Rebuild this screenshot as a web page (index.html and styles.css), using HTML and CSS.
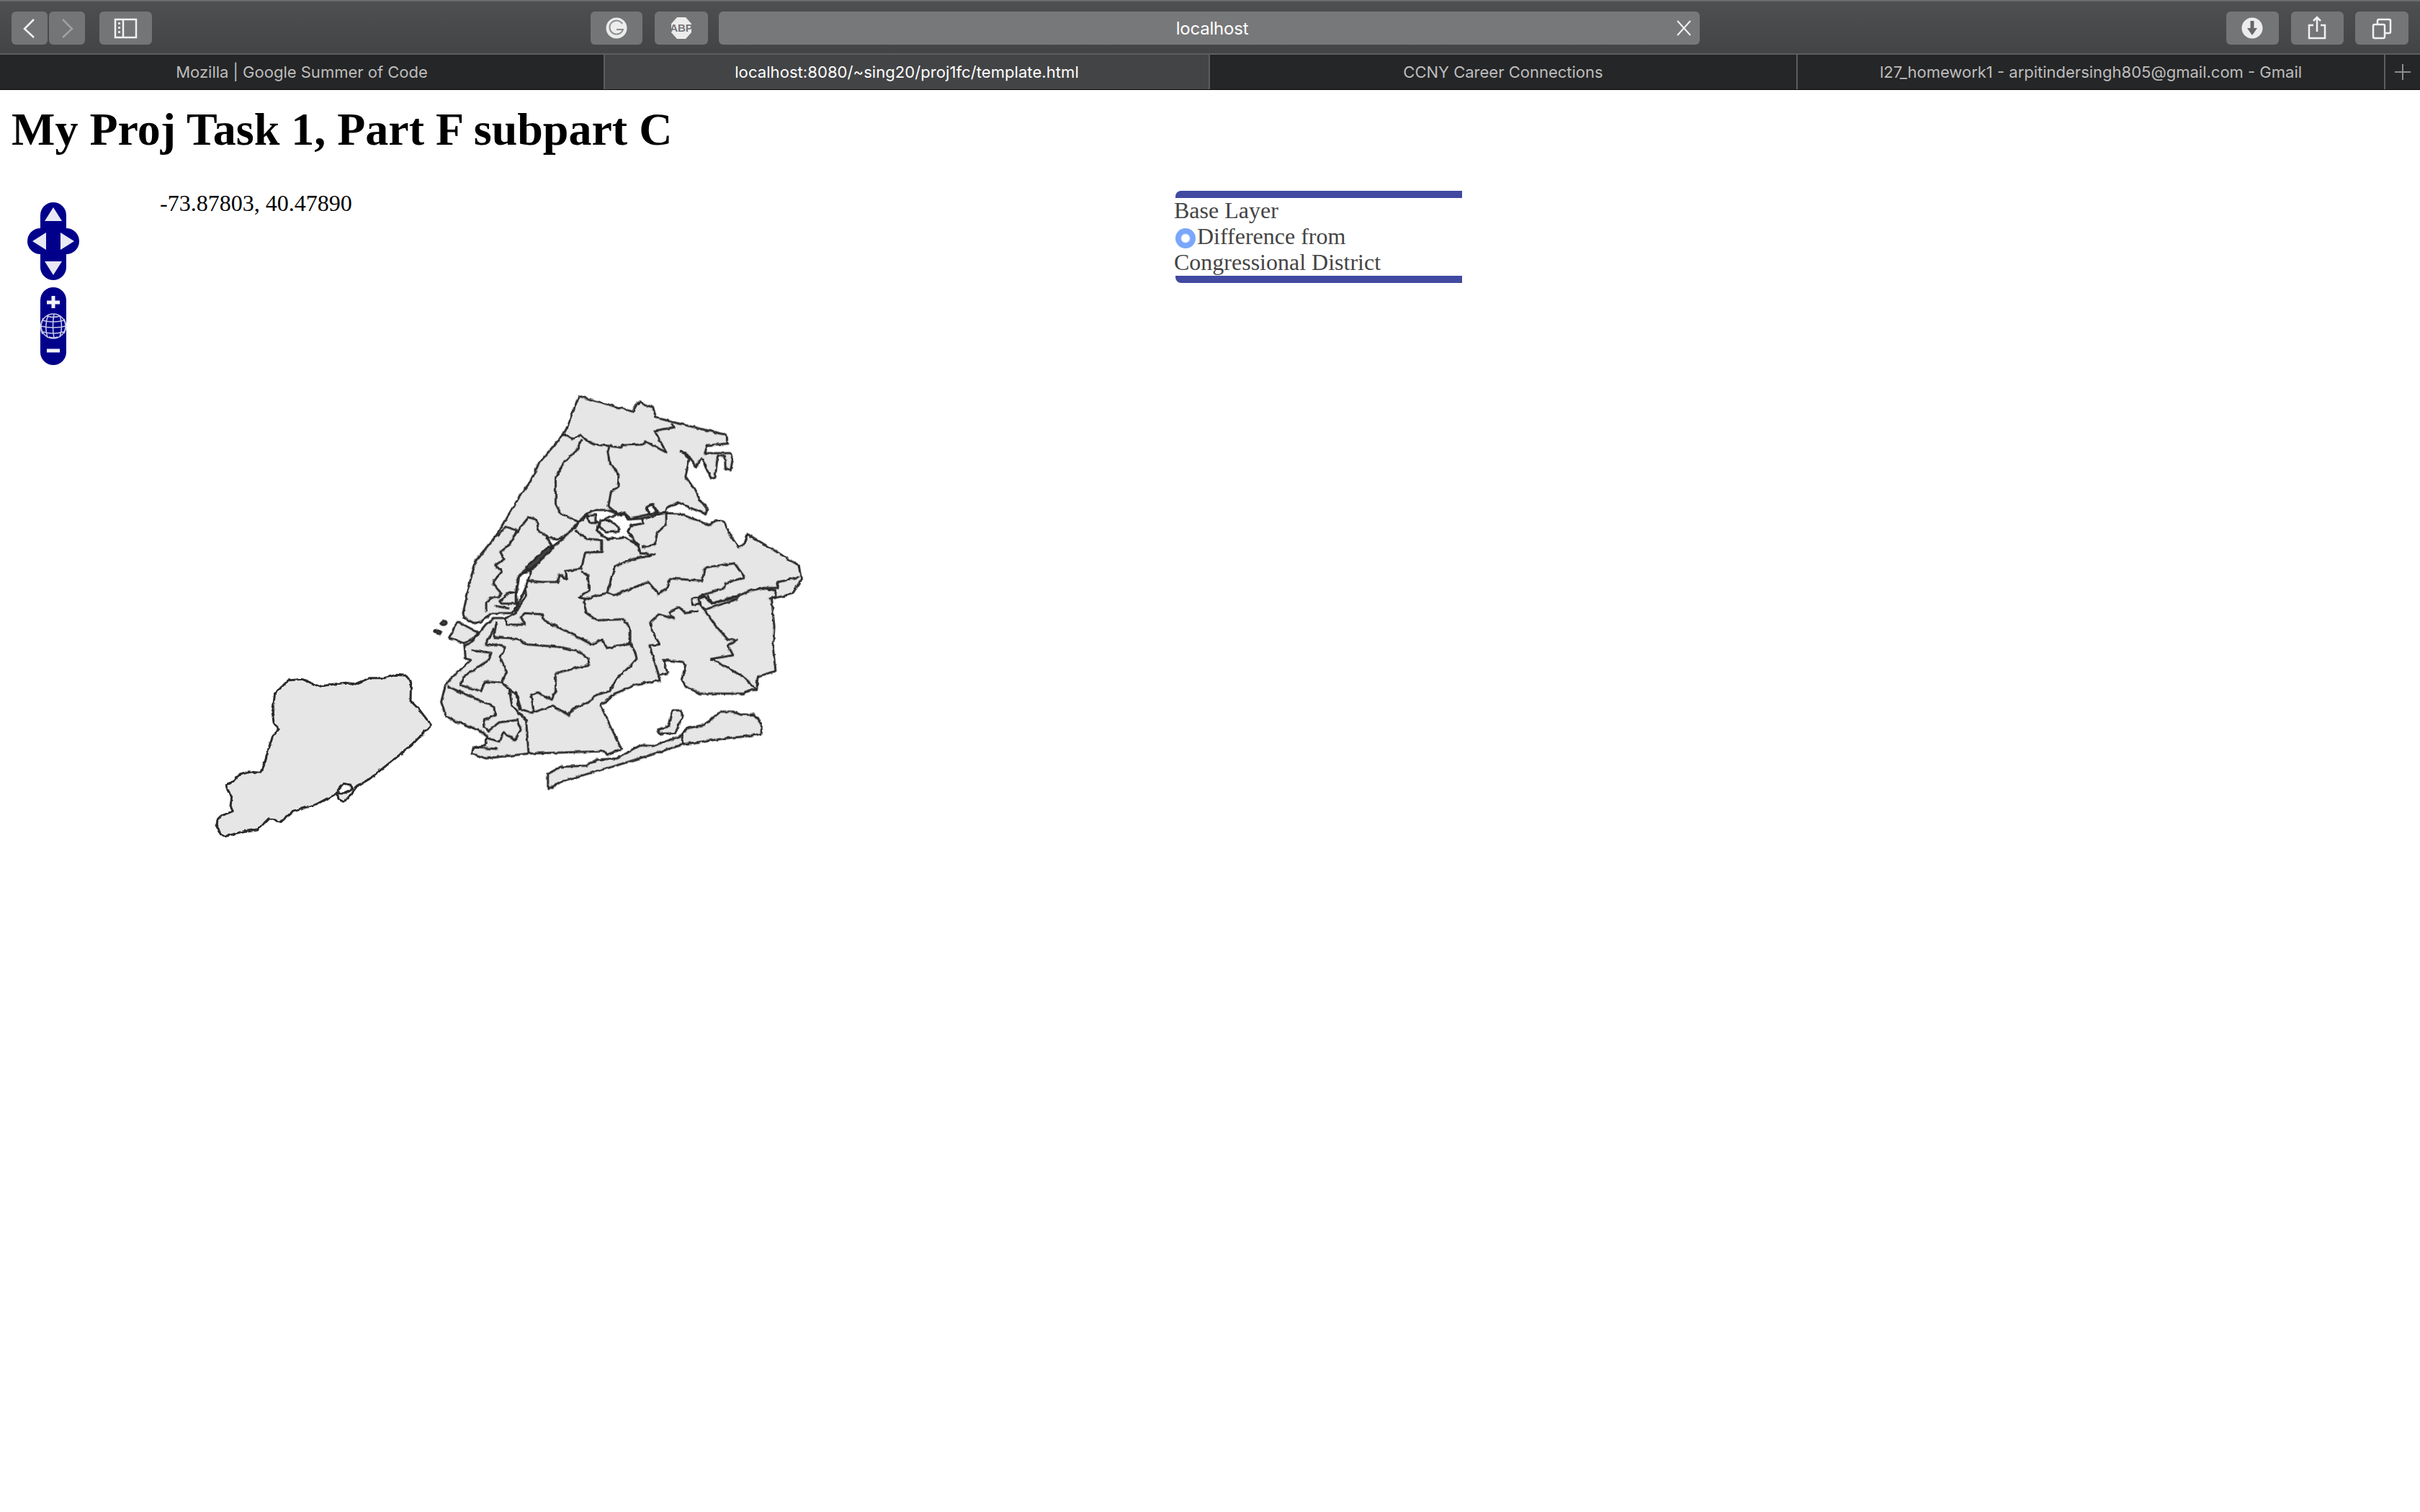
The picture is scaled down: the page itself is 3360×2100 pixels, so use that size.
FILE: index.html
```html
<!DOCTYPE html>
<html lang="en">
<head>
<meta charset="utf-8">
<title>localhost</title>
<link rel="stylesheet" href="styles.css">
</head>
<body>
<header class="chrome">
  <div class="toolbar">
    <div class="btn btn-nav"><svg class="ico" width="50" height="46" viewBox="0 0 50 46"><path class="ln" d="M31 11 18 24 31 36"/></svg></div>
    <div class="btn btn-nav btn-fwd"><svg class="ico" width="50" height="46" viewBox="0 0 50 46"><path class="ln dim" d="M19 11 32 24 19 36"/></svg></div>
    <div class="btn btn-side"><svg class="ico" width="73" height="46" viewBox="0 0 73 46"><rect class="ln" x="22" y="11" width="29" height="25"/><path class="ln" d="M33 11v25"/><path class="dots" d="M26 15h3v3h-3zM26 21h3v3h-3zM26 27h3v3h-3z"/></svg></div>
    <div class="btn btn-ext btn-g"><svg class="ico" width="72" height="46" viewBox="0 0 72 46"><circle class="disc" cx="36" cy="23" r="14.5"/><path class="cut" d="M44 17a9.5 9.5 0 1 0 1 8h-9"/></svg></div>
    <div class="btn btn-ext btn-abp"><svg class="ico" width="74" height="46" viewBox="0 0 74 46"><path class="disc" d="M31 8h12l8 9v12l-8 9H31l-8-9V17z"/><text class="abp" x="37" y="28">ABP</text></svg></div>
    <div class="url"><span class="url-text">localhost</span><svg class="url-x" width="22" height="24" viewBox="0 0 22 24"><path class="ln thin" d="M2 2 20 22M20 2 2 22"/></svg></div>
    <div class="btn btn-r btn-dl"><svg class="ico" width="73" height="46" viewBox="0 0 73 46"><circle class="disc" cx="36" cy="23" r="14.5"/><path class="cut2" d="M36 13v16"/><path class="cutf" d="M29 23h14l-7 10z"/></svg></div>
    <div class="btn btn-r btn-sh"><svg class="ico" width="73" height="46" viewBox="0 0 73 46"><path class="ln" d="M31 19h-6v18h22V19h-6"/><path class="ln" d="M36 28V8M31 13l5-5 5 5"/></svg></div>
    <div class="btn btn-r btn-tb"><svg class="ico" width="74" height="46" viewBox="0 0 74 46"><rect class="ln" x="25" y="18" width="16" height="19" rx="2"/><path class="ln" d="M31 18v-5a2 2 0 0 1 2-2h14a2 2 0 0 1 2 2v15a2 2 0 0 1-2 2h-6"/></svg></div>
  </div>
  <nav class="tabs">
    <div class="tab">Mozilla | Google Summer of Code</div>
    <div class="tab tab-active">localhost:8080/~sing20/proj1fc/template.html</div>
    <div class="tab">CCNY Career Connections</div>
    <div class="tab">l27_homework1 - arpitindersingh805@gmail.com - Gmail</div>
    <div class="tab tab-plus"><svg width="22" height="22" viewBox="0 0 22 22"><path class="plus" d="M11 0v22M0 11h22"/></svg></div>
  </nav>
</header>
<main class="page">
  <h1 class="title">My Proj Task 1, Part F subpart C</h1>
  <section class="map">
    <svg class="boro" width="1300" height="1000" viewBox="16 252 1300 1000">
      <defs>
        <filter id="coast" x="-5%" y="-5%" width="110%" height="110%">
          <feTurbulence type="fractalNoise" baseFrequency="0.13" numOctaves="2" seed="4" result="n"/>
          <feDisplacementMap in="SourceGraphic" in2="n" scale="4" xChannelSelector="R" yChannelSelector="G"/>
          <feGaussianBlur stdDeviation="0.45"/>
        </filter>
      </defs>
      <g class="land" filter="url(#coast)">
        <g transform="translate(280 900) scale(.33333)">
          <path d="M60 735 68 712 80 700 130 680 120 660 125 620 112 600 100 570 135 555 160 525 195 515 245 520 265 470 275 435 295 370 320 340 300 310 295 270 305 190 360 135 420 130 490 160 555 150 600 145 640 150 700 125 760 125 810 112 850 115 872 140 870 220 905 255 955 320 875 405 800 465 700 545 640 580 625 610 590 640 570 630 565 605 480 650 380 680 330 725 280 710 235 755 170 765 100 785 80 775Z"/>
          <path class="water" d="M568 590 590 565 620 570 625 588 590 606 568 604Z"/>
          <path class="open" d="M568 606H600L632 585"/>
        </g>
        <g transform="translate(600 530) scale(.35714 .33333)">
          <path d="M570 60 780 125 795 95 808 83 830 100 858 105 870 150 940 170 1145 222 1148 258 1070 265 1060 298 1160 298 1168 325 1160 370 1140 365 1138 310 1110 310 1100 400 1085 405 1060 350 1055 325 1045 320 1025 358 1000 310 968 290 1000 320 985 395 1020 450 1040 490 1072 535 1060 550 1000 525 960 505 920 520 905 545 880 550 858 510 830 525 845 552 770 570 745 545 725 555 680 535 640 535 600 550 570 585 515 650 485 655 445 650 470 690 370 780 335 810 325 880 330 930 310 965 230 965 185 1005 160 1005 125 985 120 965 150 820 170 745 250 640 285 575 345 470 380 420 415 340 510 220 525 190Z"/>
          <path d="M570 590 600 555 650 590 640 620 680 655 750 650 800 680 760 625 770 600 820 590 815 570 905 548 960 550 1060 590 1080 600 1105 575 1135 585 1165 650 1190 690 1210 680 1225 635 1425 765 1435 825 1400 885 1320 905 1330 1020 1325 1110 1335 1205 1265 1230 1262 1285 1240 1285 1210 1300 1040 1300 985 1270 970 1240 985 1180 975 1168 900 1160 915 1215 880 1225 885 1245 800 1260 710 1300 655 1350 735 1530 680 1555 670 1540 375 1550 210 1570 155 1550 160 1525 205 1515 215 1480 180 1450 100 1420 55 1395 35 1335 50 1270 70 1240 150 1160 130 1155 125 1100 148 1090 210 1010 240 985 290 985 325 965 365 890 360 850 370 830 380 790 465 695 510 650 560 600Z"/>
          <path d="M450 1635 500 1605 600 1600 640 1575 720 1570 810 1515 860 1518 970 1475 990 1445 1060 1430 1120 1375 1170 1375 1200 1388 1250 1387 1280 1420 1280 1468 1220 1478 1150 1485 980 1510 850 1555 700 1605 520 1660 450 1697Z"/>
          <path d="M935 1370 970 1370 972 1400 945 1465 885 1467 878 1450 920 1435Z"/>
          <path d="M100 1000 178 1045 165 1065 125 1090 65 1068Z"/>
          <path class="water" d="M655 585 690 562 745 552 762 575 815 570 822 590 770 600 760 625 800 680 750 650 680 655 640 620Z"/>
          <path class="water" d="M860 515 835 525 848 552 872 548Z"/>
          <path class="water" d="M372 787 338 812 328 880 332 930 322 958 345 905 365 855 372 830 384 792Z"/>
          <path class="dark" d="M365 775 455 685 470 695 380 785Z"/>
          <path class="dark" d="M32 1005a12 9 0 1 0 24 0a12 9 0 1 0-24 0ZM10 1040l12-6 14 10-6 8-14-4Z"/>
          <path d="M655 580 690 578 725 605 725 625 680 628 650 605Z"/>
          <path d="M605 560 635 555 635 588 610 590Z"/>
          <path class="open" d="M510 220 545 238 578 222 595 240 630 262 690 268 735 275 740 265 820 262 830 250 910 295 865 205 940 190 930 175"/>
          <path class="open" d="M580 240 565 280 510 340 480 405 480 510 500 550 570 585"/>
          <path class="open" d="M690 270 682 290 690 340 725 385 722 440 695 460 685 520 725 555"/>
          <path class="open" d="M255 645 285 605 330 620 300 680 265 710 280 740 245 765 270 790 235 840 270 885 255 900 225 900 210 920 210 960"/>
          <path class="open" d="M330 625 375 565 405 575 415 625 445 640 450 650"/>
          <path class="open" d="M265 915 300 878 325 880 325 925 270 925ZM245 935 300 945"/>
          <path class="open" d="M555 620 600 655 660 660 660 710 595 712 580 780 515 790 525 825 495 805 490 835 430 835 370 830"/>
          <path class="open" d="M580 790 605 810 610 870 570 900 600 905 680 880 710 770 780 740 865 722 810 715 800 680"/>
          <path class="open" d="M815 690 865 680 875 630 910 595 910 550"/>
          <path class="open" d="M680 880 705 890 840 835 880 885 915 860 925 820 1050 830 1060 775 1175 757 1215 815 1140 840 1135 860 1010 905 1012 930 1040 925"/>
          <path class="open" d="M600 905 590 920 600 965 640 995 745 990 770 1030 770 1090 790 1130 795 1155 770 1185 720 1235 690 1290 640 1305 600 1340 545 1365 530 1390 470 1350 390 1380 345 1365 330 1310 300 1280 270 1255 205 1250 190 1290 110 1265 120 1230 220 1160 230 1130 150 1120"/>
          <path class="open" d="M1425 815 1345 835 1340 860 1285 860 1240 870 1195 890 1085 925 1060 895 1035 905 1040 925 1060 950 1190 905M1070 890 1090 925 1160 905 1190 895"/>
          <path class="open" d="M1285 860 1335 870 1335 895 1310 905"/>
          <path class="open" d="M1040 925 1100 1015 1150 1075 1185 1075 1150 1100 1170 1140 1085 1155 1210 1230 1262 1285"/>
          <path class="open" d="M1035 955 985 965 960 940 920 960 940 988 880 970 850 1000 855 1040 885 1095 845 1100 865 1170 880 1220"/>
          <path class="open" d="M770 1090 680 1110 660 1075 620 1095 550 1055 435 995 430 970 360 965 345 980 360 1013 290 1013 285 985"/>
          <path class="open" d="M240 1065 300 1068 345 1080 370 1095 490 1105 560 1120 605 1150 610 1180 480 1215 480 1290 465 1325 410 1295 385 1305 395 1380"/>
          <path class="open" d="M210 1100 250 1095 285 1108 265 1150 290 1210 270 1255"/>
          <path class="open" d="M240 1030 205 1100M240 1065 250 1000"/>
          <path class="open" d="M60 1270 240 1355 245 1390 205 1410 200 1440 220 1455 260 1420 330 1410 345 1450 320 1495 280 1460 260 1500 215 1485"/>
          <path class="open" d="M300 1285 310 1350 365 1410 375 1550M325 1290 340 1370"/>
          <path class="open" d="M160 1525 255 1530M975 1475V1507"/>
        </g>
      </g>
    </svg>
    <p class="coords">-73.87803, 40.47890</p>
    <svg class="panzoom" width="72" height="226" viewBox="38 281 72 226">
      <g class="pz-bg">
        <rect x="56" y="281" width="36" height="108" rx="18"/>
        <rect x="38" y="317" width="72" height="36" rx="18"/>
        <rect x="56" y="399" width="36" height="108" rx="18"/>
      </g>
      <path class="pz-w" d="M74 288 86 307H62ZM84 323 103 335 84 347ZM64 323V347L45 335ZM62 363H86L74 382Z"/>
      <path class="pz-s" d="M74 411V428M65 420H83M65 487H83"/>
      <g class="pz-globe">
        <circle cx="74" cy="453" r="17"/>
        <path d="M59 445q15 4 30 0M57 453q17 4 34 0M60 461q14 4 28 0M65 439q9 3 18 0M68 468q6 2 12 0M67 437q-6 16-1 32M75 436q-3 17 0 34M83 438q5 15 0 30M60 442q-6 11-1 22M89 443q5 10 0 20"/>
      </g>
    </svg>
    <aside class="switcher">
      <div class="sw-bar sw-top"></div>
      <div class="sw-body">
        <div class="sw-line">Base Layer</div>
        <div class="sw-line"><span class="radio"></span>Difference from Congressional District</div>
      </div>
      <div class="sw-bar sw-bot"></div>
    </aside>
  </section>
</main>
</body>
</html>
```
FILE: styles.css
```css
* { box-sizing: border-box; }
html, body { margin: 0; padding: 0; background: #fff; }
body { width: 3360px; height: 2100px; overflow: hidden; font-family: "Liberation Serif", serif; }

.chrome { font-family: Inter, "Noto Sans", sans-serif; }
.toolbar {
  height: 76px;
  display: flex;
  align-items: flex-start;
  padding-top: 14px;
  padding-left: 16px;
  background: linear-gradient(#4e4f51, #434446);
  border-top: 2px solid #6b6c6e;
  border-bottom: 2px solid #5c5d5f;
}
.btn { height: 46px; border-radius: 6px; background: #747577; flex: none; }
.ico { display: block; }
.btn-nav { width: 50px; }
.btn-fwd { margin-left: 2px; }
.btn-side { width: 73px; margin-left: 20px; }
.btn-ext { margin-left: 17px; }
.btn-g { width: 72px; margin-left: 609px; }
.btn-abp { width: 74px; }
.url {
  width: 1362px;
  height: 46px;
  margin-left: 15px;
  border-radius: 6px;
  background: #77787a;
  position: relative;
  display: flex;
  align-items: center;
  justify-content: center;
  color: #fff;
  font-size: 24px;
}
.url-text { margin-left: 8px; letter-spacing: -.2px; }
.url-x { position: absolute; right: 11px; top: 11px; }
.btn-r { width: 73px; margin-left: 17px; }
.btn-dl { margin-left: 731px; }
.btn-tb { width: 74px; margin-left: 16px; }

.ln { fill: none; stroke: #f2f2f2; stroke-width: 2.5; }
.thin { stroke-width: 2; }
.dim { stroke: #a0a1a2; }
.dots { fill: #e4e4e4; }
.disc { fill: #ececec; }
.cut { fill: none; stroke: #8a8b8c; stroke-width: 2; }
.cut2 { fill: none; stroke: #666769; stroke-width: 5; }
.cutf { fill: #666769; }
.abp { fill: #747577; font: bold 15px "Liberation Sans Narrow", "Liberation Sans", sans-serif; text-anchor: middle; }

.tabs {
  height: 49px;
  display: grid;
  grid-template-columns: 840px 840px 816px 816px 48px;
  background: #252627;
  border-bottom: 1px solid #0c0c0c;
}
.tab {
  display: flex;
  align-items: center;
  justify-content: center;
  color: #bdbdbd;
  font-size: 22px;
  border-right: 2px solid #5c5d5f;
  white-space: nowrap;
}
.tab-active { background: #434446; color: #fff; letter-spacing: .07px; }
.tab-plus { border-right: 0; }
.plus { fill: none; stroke: #8d8d8e; stroke-width: 2; }

.page { padding: 0 16px; }
.title { margin: 0; padding-top: 18px; font-size: 64px; line-height: 74px; font-weight: bold; color: #000; }
.map { position: relative; height: 1000px; margin-top: 35px; }
.boro { position: absolute; left: 0; top: 0; }
.land path { fill: #e6e6e6; stroke: #2a2a2a; stroke-width: 3; stroke-linejoin: round; vector-effect: non-scaling-stroke; }
.land path.open { fill: none; }
.land path.water { fill: #fff; }
.land path.dark { fill: #444; }

.coords { position: absolute; left: 206px; top: 12px; margin: 0; font-size: 32px; line-height: 36px; color: #000; }
.panzoom { position: absolute; left: 22px; top: 29px; }
.pz-bg { fill: #00008b; }
.pz-w { fill: #e8e8f4; }
.pz-s { fill: none; stroke: #f2f2fa; stroke-width: 5; }
.pz-globe { fill: none; stroke: #c9c9e6; stroke-width: 1.6; }

.switcher { position: absolute; left: 1614px; top: 13px; width: 400px; color: #444; font-size: 32px; line-height: 36px; }
.sw-bar { height: 10px; margin-left: 2px; background: #4149a1; }
.sw-top { border-top-left-radius: 8px; }
.sw-bot { border-bottom-left-radius: 8px; }
.sw-body { width: 340px; margin-top: -1px; padding-bottom: 1px; }
.radio {
  display: inline-block;
  width: 28px;
  height: 28px;
  margin: 0 2px 0 2px;
  vertical-align: -6px;
  border-radius: 50%;
  background: radial-gradient(circle, #fff 0 5px, #7aa7fb 7px);
}
```
